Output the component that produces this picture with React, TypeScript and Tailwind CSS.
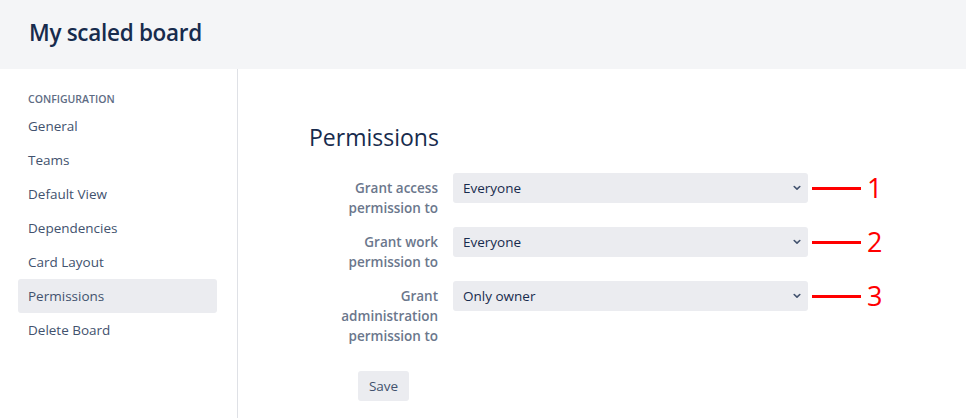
const navItems = [
  "General",
  "Teams",
  "Default View",
  "Dependencies",
  "Card Layout",
  "Permissions",
  "Delete Board",
]

const rows = [
  { label: ["Grant access", "permission to"], value: "Everyone", n: "1" },
  { label: ["Grant work", "permission to"], value: "Everyone", n: "2" },
  { label: ["Grant", "administration", "permission to"], value: "Only owner", n: "3" },
]

function Chevron() {
  return (
    <svg width="8" height="6" viewBox="0 0 8 6" className="shrink-0">
      <path d="M1.2 1.5 L4 4.2 L6.8 1.5" fill="none" stroke="#42526e" strokeWidth="1.6" strokeLinecap="round" strokeLinejoin="round" />
    </svg>
  )
}

export default function App() {
  return (
    <div className="w-[966px] h-[418px] overflow-hidden bg-white flex flex-col font-['Open_Sans',sans-serif]">
      {/* header */}
      <header className="h-[69px] shrink-0 bg-[#f4f5f7] flex items-center px-[29px]">
        <h1 className="text-[22.5px] font-semibold tracking-[-0.3px] text-[#172b4d] leading-none pb-[2px]">My scaled board</h1>
      </header>

      <div className="flex flex-1 min-h-0">
        {/* sidebar */}
        <aside className="w-[238px] shrink-0 border-r border-[#dfe1e6] pt-[23px] pl-[18px] pr-[20px]">
          <div className="pl-[10px] text-[10.5px] font-semibold uppercase text-[#5e6c84] leading-[14px] mb-[3px]">Configuration</div>
          <nav className="flex flex-col">
            {navItems.map(item => (
              <div
                key={item}
                className={
                  "h-[34px] flex items-center pl-[10px] rounded-[3px] text-[13.5px] text-[#42526e] " +
                  (item === "Permissions" ? "bg-[#ebecf0]" : "")
                }
              >
                {item}
              </div>
            ))}
          </nav>
        </aside>

        {/* main */}
        <main className="flex-1 pl-[71px] pt-[52px]">
          <h2 className="text-[23px] font-normal text-[#172b4d] leading-[32px] mb-[20px]">Permissions</h2>
          <div className="flex flex-col gap-[9px]">
            {rows.map(r => (
              <div key={r.n} className="flex items-start">
                <div className="w-[129px] shrink-0 text-right pt-[5px] text-[13.5px] font-semibold leading-[20px] text-[#6b778c]">
                  {r.label.map(l => (
                    <div key={l} className="h-[20px]">{l}</div>
                  ))}
                </div>
                <div className="ml-[15px] w-[355px] h-[30px] shrink-0 bg-[#ebecf0] rounded-[3px] flex items-center justify-between pl-[10px] pr-[7px] text-[13.5px] text-[#172b4d]">
                  <span>{r.value}</span>
                  <Chevron />
                </div>
                <div className="h-[30px] flex items-center">
                  <div className="ml-[4px] w-[49px] h-[3px] bg-[#ff0000]" />
                  <span className="ml-[6px] text-[27px] leading-none text-[#ff0000] pb-[1px]">{r.n}</span>
                </div>
              </div>
            ))}
          </div>
          <button className="mt-[25px] ml-[49px] h-[30px] w-[51px] bg-[#ebecf0] rounded-[3px] text-[13.5px] text-[#42526e] flex items-center justify-center">
            Save
          </button>
        </main>
      </div>
    </div>
  )
}
